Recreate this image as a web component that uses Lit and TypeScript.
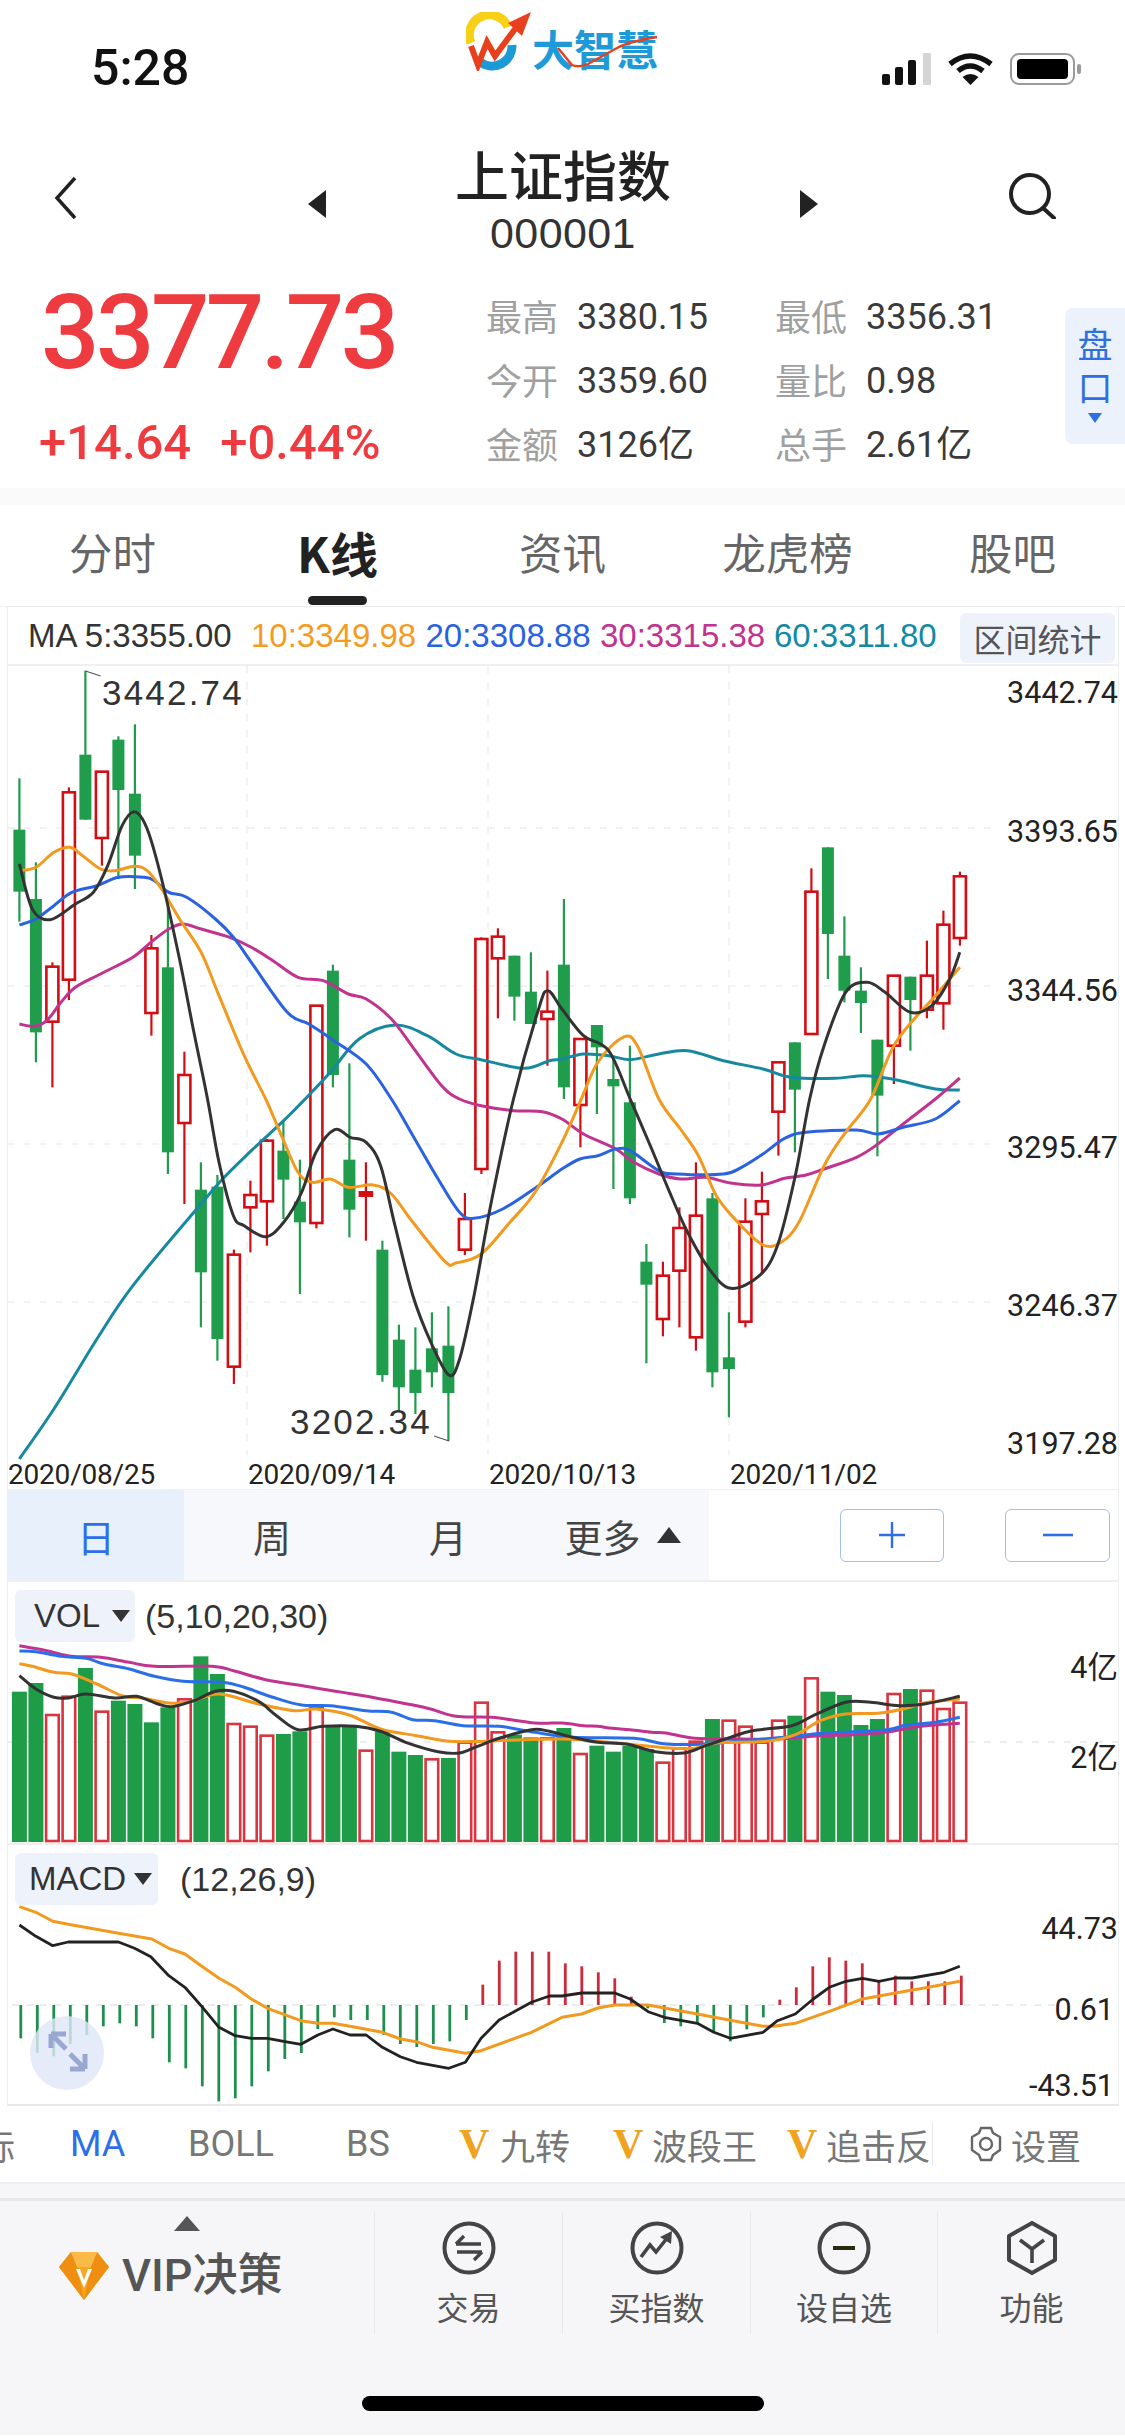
import { LitElement, html, css, svg } from "lit";
import { customElement } from "lit/decorators.js";

const K = 2.785;
const X0 = 19.4;
const STEP = 16.5;
const cx = (i: number) => X0 + STEP * i;
const my = (u: number) => 600 + u / 3;

// candles: up?, high, top, bottom, low (in stacked zoom units)
const CANDLES: [number, number, number, number, number][] = [
  [0,538,692,878,968],[0,790,900,1300,1390],[1,1090,1103,1268,1465],[1,565,580,1142,1203],[0,215,467,662,662],
  [1,518,518,717,800],[0,412,422,573,840],[0,376,584,770,870],[1,1008,1048,1242,1310],[0,900,1105,1660,1725],
  [1,1358,1428,1572,1815],[0,1690,1772,2020,2185],[0,1728,1763,2220,2285],[1,1952,1967,2303,2355],[1,1745,1788,1825,1960],
  [1,1620,1625,1807,1940],[0,1565,1655,1742,1860],[0,1682,1808,1870,2085],[1,1220,1220,1872,1888],[0,1097,1115,1428,1465],
  [0,1393,1682,1832,1915],[2,1690,1780,1790,1925],[0,1925,1952,2328,2348],[0,2177,2222,2365,2435],[0,2185,2312,2382,2445],
  [0,2140,2248,2320,2365],[0,2122,2240,2382,2526],[1,1782,1860,1952,1968],[1,1015,1020,1710,1725],[1,988,1013,1078,1258],
  [0,1070,1070,1193,1265],[0,1060,1178,1275,1275],[1,1115,1238,1260,1400],[0,900,1097,1465,1500],[1,1320,1320,1518,1645],
  [0,1278,1278,1345,1545],[0,1380,1440,1462,1770],[0,1340,1510,1798,1815],[0,1935,1988,2057,2293],[1,1988,2030,2160,2212],
  [1,1825,1887,2015,2185],[1,1690,1850,2215,2255],[0,1782,1798,2320,2365],[0,2140,2275,2310,2455],[1,1798,1868,2168,2185],
  [1,1718,1807,1845,2025],[1,1390,1390,1538,1670],[0,1330,1330,1472,1660],[1,808,878,1305,1305],[0,745,745,1005,1140],
  [0,952,1070,1175,1210],[0,1105,1175,1212,1302],[0,1322,1322,1490,1672],[1,1130,1130,1340,1455],[0,1133,1133,1203,1355],
  [1,1025,1130,1232,1258],[1,935,977,1213,1292],[1,818,832,1017,1040],
];

const seg = (dx: number, dy: number, a: number[]) => {
  const out: [number, number][] = [];
  for (let i = 0; i < a.length; i += 2) out.push([a[i] + dx, a[i + 1] + dy]);
  return out;
};
const R = 1565;
const D = 1500;

const MAIN_LINES: { c: string; p: [number, number][] }[] = [
  { c: "#16899f", p: [
    ...seg(0, D, [54,1080,150,930,270,720,370,560,540,340,620,240,700,155,790,65]),
    ...seg(0, 0, [850,1500,920,1420,1000,1320,1100,1278,1190,1310,1270,1365,1340,1382,1460,1408,1530,1385]),
    ...seg(R, 0, [0,1380,60,1365,130,1370,190,1382,270,1365,350,1355,450,1385,560,1410,640,1435,760,1438,840,1430,920,1440,1040,1470,1108,1473]),
  ]},
  { c: "#c1338e", p: [
    ...seg(0, 0, [54,1275,95,1282,130,1265,170,1210,210,1165,280,1125,370,1075,420,1030,470,990,510,975,560,990,640,1015,700,1045,760,1085,830,1135,900,1145,970,1185,1020,1200,1090,1260,1150,1345,1230,1460,1280,1500]),
    ...seg(0, D, [1340,20,1430,35,1510,38]),
    ...seg(R, D, [0,60,60,105,150,150,200,190,270,225,330,240,400,235,470,252,555,258,620,238,680,228,730,210,820,175,880,135,950,75,1040,0]),
    ...seg(R, 0, [1108,1437]),
  ]},
  { c: "#2a62e0", p: [
    ...seg(0, 0, [54,978,100,960,150,920,200,880,270,860,330,835,400,835,430,845,470,880,520,895,600,960,650,1015,700,1090,800,1240,860,1275,930,1325,1020,1395,1090,1500]),
    ...seg(0, D, [1150,110,1220,240,1280,340,1320,358,1400,330,1500,260]),
    ...seg(R, D, [0,210,50,180,100,170,150,150,190,155,270,215,320,225,450,225,500,205,560,165,620,118,680,100,820,93,880,105,950,85,1040,60,1108,5]),
  ]},
  { c: "#f29a1f", p: [
    ...seg(0, 0, [54,815,100,805,150,760,195,745,230,770,280,810,320,815,375,802,410,815,450,870,500,960,560,1060,610,1190,680,1370,740,1500]),
    ...seg(0, D, [780,100,830,220,870,250,920,240,970,265,1040,258,1090,285,1150,370,1240,488,1270,492,1340,465,1420,370,1490,280]),
    ...seg(R, D, [0,130,50,10]),
    ...seg(R, 0, [100,1390,170,1315,210,1340,270,1500]),
    ...seg(R, D, [330,90,380,170,430,290,490,370,560,438,610,430,660,370,730,200,790,100,860,0]),
    ...seg(R, 0, [930,1330,1040,1190,1108,1105]),
  ]},
  { c: "#333333", p: [
    ...seg(0, 0, [54,795,90,930,140,962,210,915,260,880,300,800,340,680,375,638,410,690,450,840,500,1080,540,1300,578,1500]),
    ...seg(0, D, [610,190,650,350,680,380,740,413,790,370,840,280,880,160,932,92,975,115,1020,130,1060,200,1100,380,1150,590,1200,730,1250,828,1280,780,1320,590,1370,300,1430,0]),
    ...seg(0, 0, [1500,1230,1526,1175]),
    ...seg(R, 0, [0,1230,60,1310,130,1355,190,1500]),
    ...seg(R, D, [250,150,300,280,350,400,410,510,470,568,550,530,600,440,650,230,690,0]),
    ...seg(R, 0, [730,1340,790,1180,850,1150,900,1180,970,1240,1030,1220,1080,1140,1108,1060]),
  ]},
];

const VOLS: [number, number][] = [
  [0,368],[0,342],[1,435],[1,380],[0,297],[1,425],[0,395],[0,405],[0,460],[0,415],[1,388],[0,262],[0,315],[1,462],[1,470],[1,497],
  [0,495],[0,487],[1,412],[0,472],[0,472],[1,542],[0,487],[0,548],[0,558],[1,568],[0,567],[1,518],[1,398],[1,487],[0,497],[0,505],
  [1,505],[0,477],[1,552],[0,530],[0,548],[0,530],[0,540],[1,578],[1,535],[1,515],[0,450],[1,452],[1,470],[1,518],[1,452],[0,440],
  [1,325],[0,368],[0,378],[0,468],[0,450],[1,372],[0,360],[1,362],[1,417],[1,398],
];

const VOL_LINES: { c: string; p: [number, number][] }[] = [
  { c: "#c1338e", p: [
    ...seg(0, 0, [54,230,130,245,200,262,280,265,360,280,430,292,590,292,650,305,740,332,850,352,1000,378,1180,415,1270,442,1370,445,1490,462]),
    ...seg(R, 0, [0,462,60,470,100,472,140,478,190,482,250,490,290,492,370,508,500,510,600,510,720,500,800,498,900,490,1000,472,1108,463]),
  ]},
  { c: "#2a6fe8", p: [
    ...seg(0, 0, [54,246,100,248,170,262,240,268,290,285,360,300,430,322,510,337,620,340,680,355,760,385,840,408,920,410,1020,425,1090,430,1150,452,1210,455,1290,470,1390,472,1490,490]),
    ...seg(R, 0, [30,505,200,508,290,525,400,525,500,515,620,505,730,492,900,483,960,468,1040,460,1108,445]),
  ]},
  { c: "#f29a1f", p: [
    ...seg(0, 0, [54,284,90,292,150,310,200,315,270,345,340,380,400,388,470,402,530,398,610,375,720,405,820,425,880,420,970,437,1060,480,1160,500,1250,517,1350,517]),
    ...seg(R, 0, [0,510,180,525,310,538,370,538,430,522,570,517,650,497,720,455,790,435,880,433,950,420,1020,400,1108,390]),
  ]},
  { c: "#333333", p: [
    ...seg(0, 0, [54,320,100,360,150,385,190,387,240,375,320,387,380,382,440,405,480,413,540,395,600,367,650,367,720,397,770,440,830,482,900,472,990,472,1060,487,1130,520,1220,548,1280,552,1330,532,1390,508,1480,482,1530,487]),
    ...seg(R, 0, [30,505,100,520,180,525,260,548,340,552,400,530,470,505,530,485,640,470,700,440,790,400,860,400,940,410,1010,405,1108,382]),
  ]},
];

const MACD_BARS = [
  568,612,622,585,558,532,523,532,568,640,658,712,757,748,712,667,630,612,540,505,513,513,558,585,594,585,577,513,
  407,335,308,308,308,343,352,370,388,443,478,522,532,522,550,577,541,505,452,415,352,325,335,343,397,380,397,397,397,380,
];
const MACD_ZERO = 468;

const MACD_DEA: [number, number][] = [
  ...seg(0, 0, [54,173,100,190,147,217,190,226,330,253,423,270,470,298,515,315,560,350,610,388,655,415,700,450,745,478,838,515,885,523,927,523,975,532,1065,550,1115,570,1160,578,1205,595,1296,613,1340,605,1480,550]),
  ...seg(R, 0, [0,505,55,495,100,477,147,468,240,468,377,495,469,514,560,532,590,532,650,523,745,487,837,450,929,432,1021,415,1108,397]),
];
const MACD_DIF: [number, number][] = [
  ...seg(0, 0, [54,228,100,262,147,290,190,279,330,279,375,298,420,323,470,380,515,415,560,470,610,535,655,560,700,568,745,568,790,577,838,586,885,558,927,540,975,558,1020,558,1065,595,1115,623,1160,640,1250,658,1296,640,1340,568,1390,513,1480,460,1530,441]),
  ...seg(R, 0, [0,441,55,432,147,432,190,450,240,488,285,505,377,523,423,550,469,568,560,550,600,515,650,495,700,450,745,415,791,397,837,388,883,397,929,387,975,387,1065,370,1108,352]),
];

const smooth = (pts: [number, number][]) => {
  let d = `M${pts[0][0].toFixed(1)} ${pts[0][1].toFixed(1)}`;
  for (let i = 0; i < pts.length - 1; i++) {
    const p0 = pts[Math.max(0, i - 1)], p1 = pts[i], p2 = pts[i + 1], p3 = pts[Math.min(pts.length - 1, i + 2)];
    const c1x = p1[0] + (p2[0] - p0[0]) / 6, c1y = p1[1] + (p2[1] - p0[1]) / 6;
    const c2x = p2[0] - (p3[0] - p1[0]) / 6, c2y = p2[1] - (p3[1] - p1[1]) / 6;
    d += `C${c1x.toFixed(1)} ${c1y.toFixed(1)} ${c2x.toFixed(1)} ${c2y.toFixed(1)} ${p2[0].toFixed(1)} ${p2[1].toFixed(1)}`;
  }
  return d;
};
const straight = (pts: [number, number][]) =>
  "M" + pts.map((p) => `${p[0].toFixed(1)} ${p[1].toFixed(1)}`).join("L");

const mapMain = (p: [number, number][]) => p.map(([v, u]) => [v / K, my(u)] as [number, number]);
const mapPanel = (p: [number, number][], y0: number) => p.map(([v, u]) => [v / K, y0 + u / 3] as [number, number]);

const GREEN = "#1f9d4c";
const RED = "#d30d14";

@customElement("app-root")
export class AppRoot extends LitElement {
  static styles = css`
    :host {
      display: block;
      width: 1125px;
      height: 2436px;
      overflow: hidden;
      background: #fff;
      font-family: "Noto Sans CJK SC", "Liberation Sans", sans-serif;
      color: #333;
    }
    svg { display: block; }

    .status { height: 100px; display: flex; align-items: flex-start; padding-left: 91px; box-sizing: border-box; }
    .time { width: 375px; margin-top: 44px; font: 500 50px/48px Roboto, sans-serif; color: #111; }
    .logo { position: relative; width: 192px; height: 59px; margin-top: 12px; margin-right: 224px; display: flex; align-items: flex-end; }
    .logo-mark { width: 66px; height: 59px; flex: none; }
    .logo-text { font: 700 42px/44px "Noto Sans CJK SC", sans-serif; color: #1e9ad8; margin-bottom: 1px; white-space: nowrap; }
    .logo-swoosh { position: absolute; left: 66px; top: 12px; width: 126px; height: 47px; }
    .signal { width: 50px; height: 32px; margin-top: 53px; }
    .wifi { width: 45px; height: 32px; margin-top: 53px; margin-left: 16px; }
    .battery { width: 72px; height: 32px; margin-top: 53px; margin-left: 17px; }

    .nav { height: 170px; display: flex; align-items: flex-start; padding-left: 54px; box-sizing: border-box; }
    .back { width: 23px; height: 44px; margin-top: 76px; margin-right: 231px; }
    .tri { width: 18px; height: 28px; margin-top: 90px; flex: none; }
    .title-box { width: 474px; text-align: center; margin-top: 44px; }
    .title { font: 500 54px/60px "Noto Sans CJK SC", sans-serif; color: #222; }
    .code { font: 400 43px/50px "Liberation Sans", sans-serif; color: #333; margin-top: 4px; letter-spacing: 0.4px; }
    .search { width: 48px; height: 46px; margin-top: 73px; margin-left: 190px; }

    .quote { height: 218px; display: flex; align-items: flex-start; box-sizing: border-box; }
    .quote-left { width: 488px; padding: 13px 0 0 39px; box-sizing: border-box; flex: none; }
    .price { font: 500 103px/100px Roboto, sans-serif; color: #ee3b3f; letter-spacing: -3.6px; margin-left: 2px; }
    .change { display: flex; gap: 29px; margin-top: 30px; font: 500 49px/60px Roboto, sans-serif; color: #ee3b3f; }
    .stats { width: 577px; flex: none; display: grid; grid-template-columns: 289px 288px; grid-auto-rows: 64px; padding-top: 15px; }
    .stat { display: flex; align-items: center; white-space: nowrap; }
    .stat-l { width: 74px; margin-left: -2px; margin-right: 17px; margin-top: -4px; font-size: 36px; line-height: 64px; color: #a0a0a0; }
    .stat-v { font: 400 36px/64px Roboto, "Noto Sans CJK SC", sans-serif; color: #3a3a3a; }
    .pankou { width: 60px; height: 136px; margin-top: 38px; background: #ecf2fb; border-radius: 8px 0 0 8px; display: flex; flex-direction: column; align-items: center; padding-top: 19px; box-sizing: border-box; color: #2f6fe0; }
    .pankou span { writing-mode: vertical-rl; font-size: 35px; line-height: 35px; letter-spacing: 8px; }
    .pankou i { display: block; width: 0; height: 0; border-left: 7px solid transparent; border-right: 7px solid transparent; border-top: 10px solid #2f6fe0; }

    .band { height: 17px; background: #fafafa; }
    .tabs { height: 102px; display: grid; grid-template-columns: repeat(5, 225px); border-bottom: 1px solid #ececec; box-sizing: border-box; }
    .tab { display: flex; flex-direction: column; align-items: center; padding-top: 17px; box-sizing: border-box; font-size: 43.5px; line-height: 60px; color: #666; }
    .tab.on { color: #222; font-weight: 700; font-size: 48px; }
    .tab.on i { display: block; width: 59px; height: 9px; margin-top: 14px; border-radius: 5px; background: #222; }

    .frame { width: 1112px; margin-left: 7px; height: 1499px; box-sizing: border-box; border-left: 1px solid #eceff2; border-right: 1px solid #eceff2; border-bottom: 2px solid #e8e8e8; position: relative; }
    .ma { height: 59px; box-sizing: border-box; border-bottom: 2px solid #f0f0f0; display: flex; align-items: center; padding-left: 20px; position: relative; font: 400 33px/40px "Liberation Sans", sans-serif; white-space: nowrap; }
    .ma span { flex: none; }
    .m5 { width: 223px; color: #333; }
    .m10 { width: 174.5px; color: #f39c1f; }
    .m20 { width: 174.5px; color: #2a62e0; }
    .m30 { width: 174px; color: #c1338e; }
    .m60 { width: 186px; color: #128aa5; }
    .range { width: 155px; height: 50px; margin-top: 5px; background: #eef2fa; border-radius: 6px; font: 400 32px/50px "Noto Sans CJK SC", sans-serif; color: #555; text-align: center; }

    .main-svg { margin-bottom: -4px; }

    .period { height: 93px; box-sizing: border-box; border-top: 1px solid #f0f0f0; border-bottom: 2px solid #f0f0f0; display: flex; align-items: center; position: relative; }
    .pcells { display: grid; grid-template-columns: 176px 176px 176px 173px; height: 100%; background: #f6f8fc; }
    .pc { display: flex; align-items: center; justify-content: center; font-size: 38px; color: #444; gap: 16px; }
    .pc.on { background: #e8f0fc; color: #2e6fe8; }
    .up { width: 0; height: 0; border-left: 12px solid transparent; border-right: 12px solid transparent; border-bottom: 16px solid #333; }
    .pm { width: 104px; height: 53px; box-sizing: border-box; border: 1.5px solid #a3c0ea; border-radius: 6px; display: flex; align-items: center; justify-content: center; flex: none; }
    .pm.plus { margin-left: 131px; }
    .pm.minus { margin-left: 61px; width: 105px; }
    .pm svg { width: 30px; height: 30px; }

    .panel { position: relative; box-sizing: border-box; padding-top: 8px; }
    .vol { height: 263px; border-bottom: 2px solid #eeeeee; }
    .macd { height: 259px; }
    .phead { display: flex; align-items: center; height: 52px; font: 400 34px/52px "Liberation Sans", sans-serif; color: #333; padding-left: 7px; }
    .tag { height: 52px; background: #edf2fb; border-radius: 6px; display: flex; align-items: center; box-sizing: border-box; flex: none; color: #333; font-size: 33px; }
    .tag.v { width: 120px; padding-left: 19px; }
    .tag.m { width: 143px; padding-left: 14px; }
    .tag b { display: block; width: 0; height: 0; border-left: 9px solid transparent; border-right: 9px solid transparent; border-top: 12px solid #333; }
    .tag.v b { margin-left: 12px; }
    .tag.m b { margin-left: 8px; }
    .args.v { margin-left: 10px; }
    .args.m { margin-left: 22px; }
    .expand { position: absolute; left: 22px; top: 171px; width: 74px; height: 74px; }

    .ind { height: 76px; display: grid; grid-template-columns: 90px 118px 158px 113px 154px 174px 145px 38px 1fr; margin-left: -20px; align-items: center; font-size: 35px; color: #777; white-space: nowrap; overflow: hidden; }
    .ind > div { display: flex; align-items: center; overflow: hidden; }
    .ind .en { font: 400 36px/44px Roboto, sans-serif; }
    .ind .active { color: #2e6fe8; }
    .ind .vv { font: 700 42px/44px "Liberation Serif", serif; color: #f0a31f; width: 30px; margin-right: 11px; flex: none; }
    .ind .vv2 { margin-right: 9px; }
    .ind .sep { height: 44px; border-left: 1px solid #e8e8e8; }
    .ind .gear { width: 32px; height: 44px; margin-right: 9px; }

    .band2 { height: 16px; background: #f6f6f9; border-top: 2px solid #f0f0f2; box-sizing: border-box; }
    .foot { height: 237px; box-sizing: border-box; background: #f6f6f9; border-top: 3px solid #e8e8ea; padding-top: 11px; }
    .cells { display: grid; grid-template-columns: 374px 188px 188px 187px 188px; height: 122px; }
    .vip { display: flex; flex-direction: column; align-items: flex-start; padding-left: 59px; box-sizing: border-box; }
    .vip > i { display: block; width: 0; height: 0; border-left: 13px solid transparent; border-right: 13px solid transparent; border-bottom: 15px solid #555; margin: 4px 0 0 115px; }
    .vip-row { display: flex; align-items: center; height: 50px; margin-top: 20px; }
    .vip-row svg { width: 50px; height: 48px; margin-right: 13px; }
    .vip-row span { font: 500 45px/50px Roboto, "Noto Sans CJK SC", sans-serif; color: #555; white-space: nowrap; }
    .act { border-left: 1.5px solid #e8e8eb; display: flex; flex-direction: column; align-items: center; padding-top: 9px; box-sizing: border-box; }
    .act svg { width: 54px; height: 54px; }
    .act span { margin-top: 11px; font-size: 32px; line-height: 40px; color: #555; white-space: nowrap; }
    .home { width: 402px; height: 15px; border-radius: 8px; background: #000; margin: 62px auto 0; }

    .ax { font: 400 30.5px Roboto, "Noto Sans CJK SC", sans-serif; fill: #222; }
    .dt { font: 400 28px Roboto, sans-serif; fill: #222; letter-spacing: -0.2px; }
    .ann { font: 400 35px "Liberation Sans", sans-serif; fill: #333; letter-spacing: 2.2px; }
  `;

  private statusBar() {
    return html`<div class="status">
      <div class="time">5:28</div>
      <div class="logo">
        <svg class="logo-mark" viewBox="0 0 66 59" fill="none">
          <path d="M5 31A20 20 0 0 1 42 15" stroke="#f7d117" stroke-width="9"/>
          <path d="M14 50A20 20 0 0 0 46 33" stroke="#1c9ad6" stroke-width="9"/>
          <path d="M5 34L12 53L21 30L29 44L49 17" stroke="#e8401c" stroke-width="6"/>
          <path d="M65 0L42 11L56 24Z" fill="#e8401c"/>
        </svg>
        <span class="logo-text">大智慧</span>
        <svg class="logo-swoosh" viewBox="0 0 126 47" fill="none"><path d="M26 24L40 41Q46 44 56 40L85 24Q95 18 125 13" stroke="#e8401c" stroke-width="2.4"/></svg>
      </div>
      <svg class="signal" viewBox="0 0 50 32">
        <rect x="0" y="21" width="8" height="11" rx="2" fill="#111"/>
        <rect x="13" y="14" width="8" height="18" rx="2" fill="#111"/>
        <rect x="26" y="7" width="8" height="25" rx="2" fill="#111"/>
        <rect x="41" y="0" width="8" height="32" rx="1" fill="#d5d5d5"/>
      </svg>
      <svg class="wifi" viewBox="0 0 45 32" fill="none" stroke="#111" stroke-width="5.5">
        <path d="M2 11Q22 -5 43 11"/>
        <path d="M10 18Q22 8 35 18"/>
        <path d="M22.5 32L14.5 24Q22.5 18 30.5 24Z" fill="#111" stroke="none"/>
      </svg>
      <svg class="battery" viewBox="0 0 72 32">
        <rect x="1" y="1" width="63" height="30" rx="8" fill="#fff" stroke="#9a9a9a" stroke-width="2"/>
        <rect x="7" y="6" width="51" height="20" rx="4" fill="#000"/>
        <rect x="67" y="11" width="4" height="10" rx="2" fill="#9a9a9a"/>
      </svg>
    </div>`;
  }

  private navBar() {
    return html`<div class="nav">
      <svg class="back" viewBox="0 0 23 44" fill="none"><path d="M21 2L3 22L21 42" stroke="#222" stroke-width="3.5"/></svg>
      <svg class="tri" viewBox="0 0 18 28"><path d="M18 0V28L0 14Z" fill="#222"/></svg>
      <div class="title-box">
        <div class="title">上证指数</div>
        <div class="code">000001</div>
      </div>
      <svg class="tri" viewBox="0 0 18 28"><path d="M0 0V28L18 14Z" fill="#222"/></svg>
      <svg class="search" viewBox="0 0 48 46" fill="none" stroke="#222" stroke-width="4"><circle cx="22" cy="21" r="19"/><path d="M35 35L46 45" stroke-linecap="round"/></svg>
    </div>`;
  }

  private quote() {
    const stats = [
      ["最高", "3380.15"], ["最低", "3356.31"],
      ["今开", "3359.60"], ["量比", "0.98"],
      ["金额", "3126亿"], ["总手", "2.61亿"],
    ];
    return html`<div class="quote">
      <div class="quote-left">
        <div class="price">3377.73</div>
        <div class="change"><span>+14.64</span><span>+0.44%</span></div>
      </div>
      <div class="stats">
        ${stats.map((s) => html`<div class="stat"><span class="stat-l">${s[0]}</span><span class="stat-v">${s[1]}</span></div>`)}
      </div>
      <div class="pankou"><span>盘口</span><i></i></div>
    </div>`;
  }

  private tabs() {
    const t = ["分时", "K线", "资讯", "龙虎榜", "股吧"];
    return html`<div class="band"></div><div class="tabs">
      ${t.map((s, i) => html`<div class="tab ${i === 1 ? "on" : ""}"><span>${s}</span>${i === 1 ? html`<i></i>` : ""}</div>`)}
    </div>`;
  }

  private mainChart() {
    const hs = [829, 987, 1145, 1303];
    const vs = [247, 488, 729];
    const labels: [string, number][] = [["3442.74", 704], ["3393.65", 843], ["3344.56", 1002], ["3295.47", 1159], ["3246.37", 1317], ["3197.28", 1455]];
    const dates: [string, number][] = [["2020/08/25", 8], ["2020/09/14", 248], ["2020/10/13", 489], ["2020/11/02", 730]];
    return html`<svg class="main-svg" width="1110" height="827" viewBox="8 667 1110 827">
      ${hs.map((y) => svg`<line x1="8" x2="1000" y1=${y} y2=${y} stroke="#eeeeee" stroke-width="1.5" stroke-dasharray="7 9"/>`)}
      ${vs.map((x) => svg`<line x1=${x} x2=${x} y1="667" y2="1456" stroke="#eeeeee" stroke-width="1.5" stroke-dasharray="7 9"/>`)}
      ${CANDLES.map(([t, h, a, b, l], i) => {
        const x = cx(i);
        const col = t === 0 ? GREEN : RED;
        return svg`
          <line x1=${x} x2=${x} y1=${my(h)} y2=${my(l)} stroke=${col} stroke-width="2.2"/>
          ${t === 0
            ? svg`<rect x=${x - 6} y=${my(a)} width="12" height=${my(b) - my(a)} fill=${col}/>`
            : svg`<rect x=${x - 6} y=${my(a)} width="12" height=${Math.max(my(b) - my(a), 2)} fill=${t === 2 ? col : "#fff"} stroke=${col} stroke-width="2.6"/>`}
        `;
      })}
      ${MAIN_LINES.map((l) => svg`<path d=${smooth(mapMain(l.p))} fill="none" stroke=${l.c} stroke-width="3" stroke-linejoin="round"/>`)}
      <path d="M85.5 672L100.5 677" stroke="#555" stroke-width="1.2" fill="none"/>
      <text class="ann" x="102" y="706">3442.74</text>
      <path d="M434 1437L449 1442" stroke="#555" stroke-width="1.2" fill="none"/>
      <text class="ann" x="290" y="1435">3202.34</text>
      ${labels.map(([t, y]) => svg`<text class="ax" x="1118" y=${y} text-anchor="end">${t}</text>`)}
      ${dates.map(([t, x]) => svg`<text class="dt" x=${x} y="1485">${t}</text>`)}
    </svg>`;
  }

  private period() {
    return html`<div class="period">
      <div class="pcells">
        <div class="pc on">日</div><div class="pc">周</div><div class="pc">月</div>
        <div class="pc"><span>更多</span><span class="up"></span></div>
      </div>
      <div class="pm plus"><svg viewBox="0 0 30 30"><path d="M15 2V28M2 15H28" stroke="#2e6fe8" stroke-width="2.4"/></svg></div>
      <div class="pm minus"><svg viewBox="0 0 30 30"><path d="M0 15H30" stroke="#2e6fe8" stroke-width="2.6"/></svg></div>
    </div>`;
  }

  private volPanel() {
    const Y0 = 1570;
    const base = 1843;
    return html`<div class="panel vol">
      <div class="phead">
        <div class="tag v"><span>VOL</span><b></b></div>
        <span class="args v">(5,10,20,30)</span>
      </div>
      <svg width="1110" height="201" viewBox="8 1643 1110 201">
        <line x1="8" x2="1118" y1="1743" y2="1743" stroke="#e8e8e8" stroke-width="1.5" stroke-dasharray="7 9"/>
        ${VOLS.map(([up, t], i) => {
          const x = cx(i);
          const y = Y0 + t / 3;
          return up
            ? svg`<rect x=${x - 6.3} y=${y + 1} width="12.6" height=${base - y - 2} fill="#fff" fill-opacity="0.6" stroke="#d9343f" stroke-width="2.6"/>`
            : svg`<rect x=${x - 7.5} y=${y} width="15" height=${base - y} fill="#1e9c48"/>`;
        })}
        ${VOL_LINES.map((l) => svg`<path d=${smooth(mapPanel(l.p, Y0))} fill="none" stroke=${l.c} stroke-width="3"/>`)}
        <text class="ax" x="1118" y="1679" text-anchor="end">4亿</text>
        <text class="ax" x="1118" y="1769" text-anchor="end">2亿</text>
      </svg>
    </div>`;
  }

  private macdPanel() {
    const Y0 = 1850;
    const zero = Y0 + MACD_ZERO / 3;
    return html`<div class="panel macd">
      <div class="phead">
        <div class="tag m"><span>MACD</span><b></b></div>
        <span class="args m">(12,26,9)</span>
      </div>
      <svg width="1110" height="199" viewBox="8 1906 1110 199">
        <line x1="12" x2="1060" y1=${zero} y2=${zero} stroke="#e6e6e6" stroke-width="1.5" stroke-dasharray="7 7"/>
        ${MACD_BARS.map((t, i) => {
          const x = 20.8 + 16.5 * i;
          const y = Y0 + t / 3;
          const red = t < MACD_ZERO;
          return svg`<rect x=${x - 1.4} y=${Math.min(y, zero)} width="2.8" height=${Math.abs(y - zero)} fill=${red ? "#cc2b3c" : "#1e8f4e"}/>`;
        })}
        <path d=${straight(mapPanel(MACD_DEA, Y0))} fill="none" stroke="#f29a1f" stroke-width="3" stroke-linejoin="round"/>
        <path d=${straight(mapPanel(MACD_DIF, Y0))} fill="none" stroke="#222" stroke-width="2.8" stroke-linejoin="round"/>
        <text class="ax" x="1118" y="1940" text-anchor="end">44.73</text>
        <text class="ax" x="1114" y="2021" text-anchor="end">0.61</text>
        <text class="ax" x="1114" y="2097" text-anchor="end">-43.51</text>
      </svg>
      <svg class="expand" viewBox="0 0 74 74" fill="none">
        <circle cx="37" cy="37" r="37" fill="#dfe6f7" fill-opacity="0.82"/>
        <path d="M21 18L36 33M21 18V32M21 18H36" stroke="#98a8d2" stroke-width="5"/>
        <path d="M40 38L55 53M55 53V38M55 53H40" stroke="#98a8d2" stroke-width="5"/>
      </svg>
    </div>`;
  }

  private indicators() {
    return html`<div class="ind">
      <div>标</div>
      <div class="en active">MA</div>
      <div class="en">BOLL</div>
      <div class="en">BS</div>
      <div><span class="vv">V</span>九转</div>
      <div><span class="vv vv2">V</span>波段王</div>
      <div><span class="vv vv2">V</span>追击反</div>
      <div><span class="sep"></span></div>
      <div>
        <svg class="gear" viewBox="0 0 32 44" fill="none" stroke="#666" stroke-width="2.4">
          <path d="M11 6L21 6L23 11L30 15L30 28L23 33L21 38L11 38L9 33L2 28L2 15L9 11Z" stroke-linejoin="round"/>
          <circle cx="16" cy="22" r="6"/>
        </svg>设置
      </div>
    </div>`;
  }

  private footer() {
    return html`<div class="band2"></div><div class="foot">
      <div class="cells">
        <div class="vip">
          <i></i>
          <div class="vip-row">
            <svg viewBox="0 0 50 48">
              <path d="M12 0H38L50 15L25 48L0 15Z" fill="#f5a623"/>
              <path d="M12 0L18 15L25 48L0 15ZM38 0L32 15L25 48L50 15Z" fill="#ee8f12"/>
              <path d="M12 0H38L32 15H18Z" fill="#f9bb45"/>
              <path d="M17 17L25 36L33 17H29L25 28L21 17Z" fill="#fff"/>
            </svg>
            <span>VIP决策</span>
          </div>
        </div>
        <div class="act">
          <svg viewBox="0 0 54 54" fill="none" stroke="#444" stroke-width="4"><circle cx="27" cy="27" r="24.5"/><path d="M14 23H39M22 15L14 23M40 31H15M32 39L40 31" stroke-width="3.4"/></svg>
          <span>交易</span>
        </div>
        <div class="act">
          <svg viewBox="0 0 54 54" fill="none" stroke="#444" stroke-width="4"><circle cx="27" cy="27" r="24.5"/><path d="M11 36L20 24L26 31L38 16" stroke-width="3.6"/><path d="M42 10L41 23L30 16Z" fill="#444" stroke="none"/></svg>
          <span>买指数</span>
        </div>
        <div class="act">
          <svg viewBox="0 0 54 54" fill="none" stroke="#444" stroke-width="4"><circle cx="27" cy="27" r="24.5"/><path d="M16 27H38" stroke="#2a2a10" stroke-width="4"/></svg>
          <span>设自选</span>
        </div>
        <div class="act">
          <svg viewBox="0 0 54 54" fill="none" stroke="#444" stroke-width="4"><path d="M27 2L50 15V39L27 52L4 39V15Z" stroke-linejoin="round"/><path d="M15 19L27 28L39 19M27 28V42" stroke-width="3.6"/></svg>
          <span>功能</span>
        </div>
      </div>
      <div class="home"></div>
    </div>`;
  }

  render() {
    return html`
      ${this.statusBar()}
      ${this.navBar()}
      ${this.quote()}
      ${this.tabs()}
      <div class="frame">
        <div class="ma">
          <span class="m5">MA 5:3355.00</span>
          <span class="m10">10:3349.98</span>
          <span class="m20">20:3308.88</span>
          <span class="m30">30:3315.38</span>
          <span class="m60">60:3311.80</span>
          <span class="range">区间统计</span>
        </div>
        ${this.mainChart()}
        ${this.period()}
        ${this.volPanel()}
        ${this.macdPanel()}
      </div>
      ${this.indicators()}
      ${this.footer()}
    `;
  }
}
